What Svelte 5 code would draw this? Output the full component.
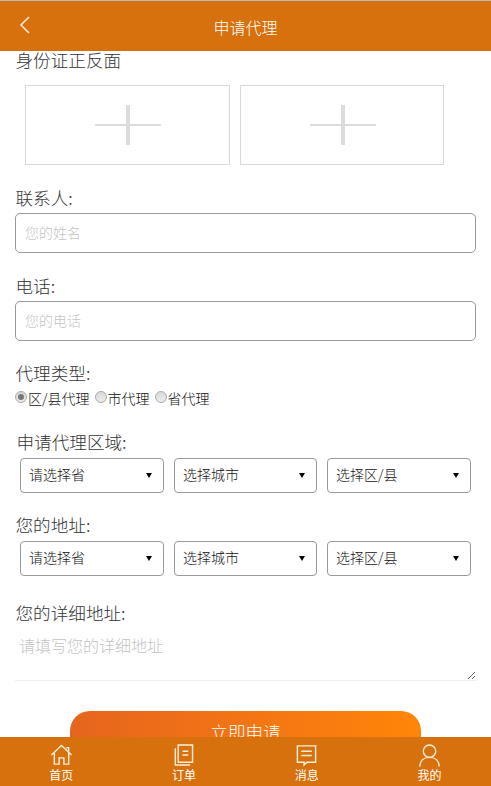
<script>
  const pickers = [
    { label: '申请代理区域:', cls: 'area' },
    { label: '您的地址:', cls: 'addr' }
  ];
  const selects = ['请选择省', '选择城市', '选择区/县'];
  const types = ['区/县代理', '市代理', '省代理'];
  const tabs = ['首页', '订单', '消息', '我的'];
</script>

<div class="page">
  <header class="top">
    <svg class="back" width="14" height="20" viewBox="0 0 14 20"><path d="M11 2 3 10l8 8" fill="none" stroke="#fbe6d0" stroke-width="1.6"/></svg>
    <h1>申请代理</h1>
  </header>

  <main class="content">
    <div class="label idlabel">身份证正反面</div>
    <div class="uploads">
      {#each [0, 1] as i}
        <div class="upload"><span class="plus-h"></span><span class="plus-v"></span></div>
      {/each}
    </div>

    <div class="label contact">联系人:</div>
    <input class="text" placeholder="您的姓名" />
    <div class="label phone">电话:</div>
    <input class="text" placeholder="您的电话" />

    <div class="label type">代理类型:</div>
    <div class="radios">
      {#each types as t, i}
        <label class="radio"><span class="dot" class:on={i === 0}></span>{t}</label>
      {/each}
    </div>

    {#each pickers as p}
      <div class="label {p.cls}">{p.label}</div>
      <div class="selects">
        {#each selects as s}
          <div class="sel">
            <select><option>{s}</option></select>
            <span class="arrow"></span>
          </div>
        {/each}
      </div>
    {/each}

    <div class="label detail">您的详细地址:</div>
    <textarea placeholder="请填写您的详细地址"></textarea>

    <button class="submit">立即申请</button>
  </main>

  <footer class="tabs">
    {#each tabs as t, i}
      <div class="tab">
        <svg class="icon{i}" width="24" height="24" viewBox="0 0 24 24" fill="none" stroke="#fdeeda" stroke-width="1.5">
          {#if i === 0}
            <path d="M1.500 12 12 2l10.500 10M4.500 10v11.500h5V15h5v6.500h5V10M17 4.500h2.500V8"/>
          {:else if i === 1}
            <path d="M7.500 1.500h15v18h-15zM4.500 5v17.500H20"/><path d="M12 8h6M12 12h6"/>
          {:else if i === 2}
            <path d="M2.500 2.500h19v17h-9l-3 3v-3h-7z"/><path d="M6.500 8h11M6.500 12.500h11"/>
          {:else}
            <circle cx="12" cy="8" r="6.500"/><path d="M2 24c0-6 4-9.500 10-9.500S22 18 22 24"/>
          {/if}
        </svg>
        <span>{t}</span>
      </div>
    {/each}
  </footer>
</div>

<style>
  :global(body) { margin: 0; background: #fff; }
  .page {
    width: 491px;
    height: 786px;
    display: flex;
    flex-direction: column;
    overflow: hidden;
    font-family: "Noto Sans CJK SC", "Liberation Sans", sans-serif;
    font-weight: 300;
    color: #333;
  }
  .top {
    height: 50px;
    flex: none;
    border-top: 1px solid #bbb;
    background: #d7710d;
    display: flex;
    align-items: center;
    justify-content: center;
    position: relative;
  }
  h1 { margin: 2px 0 0; font-size: 16px; font-weight: 300; color: #fff; }
  .back { position: absolute; left: 18px; top: 14px; }
  .content {
    flex: 1;
    min-height: 0;
    overflow: hidden;
    padding: 0 15px;
    display: flex;
    flex-direction: column;
    align-items: flex-start;
  }
  .content > * { flex: none; }
  .label { font-size: 17.6px; line-height: 18px; margin-bottom: 2px; margin-left: 0.5px; }
  .uploads { display: flex; gap: 10px; margin: 14px 0 0 10px; }
  .upload {
    width: 203px;
    height: 78px;
    border: 1px solid #d9d9d9;
    position: relative;
  }
  .upload:last-child { width: 202px; }
  .plus-h, .plus-v { position: absolute; background: #dcdcdc; }
  .plus-h { left: 69px; width: 66px; top: 38px; height: 2px; }
  .plus-v { left: 100px; width: 4px; top: 19px; height: 40px; }
  .contact { margin-top: 24px; }
  .phone { margin-top: 24px; }
  .type { margin-top: 23px; }
  .area { margin-top: 24px; margin-left: 1.500px; }
  .addr { margin-top: 23px; }
  .detail { margin-top: 28px; }
  .text {
    box-sizing: border-box;
    width: 461px;
    height: 40px;
    margin-top: 4px;
    padding: 0 9px 2px;
    border: 1px solid #999;
    border-radius: 5px;
    font: 300 14px "Noto Sans CJK SC", sans-serif;
    outline: none;
  }
  ::placeholder { color: #c4c4c4; }
  .radios { display: flex; gap: 5px; height: 20px; margin-top: 5px; font-size: 14px; color: #111; }
  .radio { display: flex; align-items: center; line-height: 18px; height: 18px; }
  .dot {
    width: 12px;
    height: 12px;
    box-sizing: border-box;
    border-radius: 50%;
    border: 1px solid #aaa;
    background: linear-gradient(#d8d8d8, #ececec);
    margin-right: 1px;
    margin-top: -2px;
    position: relative;
  }
  .dot.on::after {
    content: "";
    position: absolute;
    inset: 2px;
    border-radius: 50%;
    background: #777;
  }
  .selects { display: flex; gap: 10px; margin: 5px 0 0 5px; }
  .sel { position: relative; width: 144px; height: 35px; }
  .sel:nth-child(2) { width: 143px; }
  select {
    appearance: none;
    box-sizing: border-box;
    width: 100%;
    height: 100%;
    padding: 0 5px 3px 8px;
    border: 1px solid #999;
    border-radius: 4px;
    background: #fff;
    color: #111;
    font: 300 14px "Noto Sans CJK SC", sans-serif;
    outline: none;
  }
  .arrow {
    position: absolute;
    right: 12px;
    top: 15px;
    width: 0;
    height: 0;
    border: 3px solid transparent;
    border-top: 5px solid #000;
    border-bottom: 0;
    pointer-events: none;
  }
  textarea {
    box-sizing: border-box;
    width: 461px;
    height: 55px;
    margin-top: 2px;
    padding: 7px 4px;
    border: none;
    border-bottom: 1px solid #eee;
    font: 300 16px/24px "Noto Sans CJK SC", sans-serif;
    outline: none;
  }
  .submit {
    align-self: center;
    width: 351px;
    height: 44px;
    margin-top: 30px;
    padding: 0 0 4px;
    border: none;
    border-radius: 20px;
    background: linear-gradient(90deg, #e6651e, #ff8509);
    color: #fff;
    font: 300 17.6px "Noto Sans CJK SC", sans-serif;
  }
  .tabs {
    flex: none;
    height: 49px;
    background: #d7710d;
    display: grid;
    grid-template-columns: repeat(4, 1fr);
    position: relative;
    z-index: 1;
  }
  .tab {
    display: flex;
    flex-direction: column;
    align-items: center;
    color: #fff;
    font-size: 12px;
    font-weight: 400;
    line-height: 15px;
    padding-top: 6px;
  }
  .tab svg { width: 23px; height: 24px; flex: none; }
  .tab .icon1 { margin-right: 3px; }
</style>
